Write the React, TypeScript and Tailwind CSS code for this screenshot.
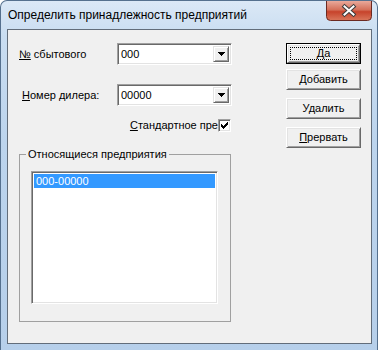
import type { ReactNode } from "react";

const sunken =
  "border border-t-[#a0a0a0] border-l-[#a0a0a0] border-b-white border-r-white shadow-[inset_1px_1px_0_#696969,inset_-1px_-1px_0_#e3e3e3]";
const raised =
  "border border-t-white border-l-white border-b-[#696969] border-r-[#696969] shadow-[inset_1px_1px_0_#e3e3e3,inset_-1px_-1px_0_#a0a0a0]";

function Arrow() {
  return (
    <svg width="7" height="4" shapeRendering="crispEdges">
      <rect x="0" y="0" width="7" height="1" fill="#000" />
      <rect x="1" y="1" width="5" height="1" fill="#000" />
      <rect x="2" y="2" width="3" height="1" fill="#000" />
      <rect x="3" y="3" width="1" height="1" fill="#000" />
    </svg>
  );
}

function ComboBox({ value }: { value: string }) {
  return (
    <div className={`flex h-[22px] w-[115px] bg-white p-[2px] ${sunken}`}>
      <div className="flex flex-1 items-center pl-[1px] text-[11px] leading-none text-black">
        {value}
      </div>
      <div
        className={`flex w-[16px] items-center justify-center bg-[#f0f0f0] border border-t-[#e3e3e3] border-l-[#e3e3e3] border-b-[#696969] border-r-[#696969] shadow-[inset_1px_1px_0_#fff,inset_-1px_-1px_0_#a0a0a0]`}
      >
        <Arrow />
      </div>
    </div>
  );
}

function Button({
  children,
  isDefault,
  className = "",
}: {
  children: ReactNode;
  isDefault?: boolean;
  className?: string;
}) {
  if (isDefault) {
    return (
      <div className={`flex h-[21px] w-[75px] border border-black ${className}`}>
        <div className={`flex flex-1 bg-[#f0f0f0] p-[2px] ${raised}`}>
          <div className="flex flex-1 items-center justify-center border border-dotted border-black text-[11px] leading-none text-black">
            {children}
          </div>
        </div>
      </div>
    );
  }
  return (
    <div
      className={`flex h-[21px] w-[75px] items-center justify-center bg-[#f0f0f0] text-[11px] leading-none text-black ${raised} ${className}`}
    >
      {children}
    </div>
  );
}

function CloseButton() {
  return (
    <svg width="46" height="20" viewBox="0 0 46 20">
      <defs>
        <linearGradient id="cb" x1="0" y1="0" x2="0" y2="1">
          <stop offset="0" stopColor="#e9a99b" />
          <stop offset="0.45" stopColor="#d4705a" />
          <stop offset="0.55" stopColor="#c7432b" />
          <stop offset="1" stopColor="#d9775c" />
        </linearGradient>
      </defs>
      <path
        d="M0.5 0 V15.5 A4 4 0 0 0 4.5 19.5 H41.5 A4 4 0 0 0 45.5 15.5 V0"
        fill="url(#cb)"
        stroke="#6b2a22"
      />
      <path
        d="M18.5 5.5 L27.5 13.5 M27.5 5.5 L18.5 13.5"
        stroke="#3b3b3b"
        strokeWidth="4"
        strokeLinecap="square"
      />
      <path
        d="M18.5 5.5 L27.5 13.5 M27.5 5.5 L18.5 13.5"
        stroke="#fff"
        strokeWidth="2"
        strokeLinecap="square"
      />
    </svg>
  );
}

export default function App() {
  return (
    <div className="h-[350px] w-[378px] overflow-hidden font-['Liberation_Sans',Arial,sans-serif]">
      <div className="flex h-[352px] w-[378px] flex-col rounded-t-[7px] border-l border-r border-t border-[#55708e] bg-[linear-gradient(180deg,#dbe8f6_0%,#c9ddf1_10%,#bcd4ed_40%,#b6cfea_100%)]">
        <div className="flex h-[28px] items-start justify-between pr-[5px]">
          <div className="pl-[7px] pt-[7px] text-[12px] leading-[14px] text-black">
            Определить принадлежность предприятий
          </div>
          <CloseButton />
        </div>
        <div className="ml-[6px] flex h-[315px] w-[365px] border border-[#626d7a] bg-[#f0f0f0] pl-[11px] pt-[13px]">
          <div className="flex w-[213px] flex-col">
            <div className="flex h-[22px] items-center">
              <span className="w-[98px] text-[11px] text-black">
                <span className="underline">№</span> сбытового
              </span>
              <ComboBox value="000" />
            </div>
            <div className="mt-[19px] flex h-[22px] items-center">
              <span className="w-[98px] pl-[3px] text-[11px] text-black">
                <span className="underline">Н</span>омер дилера:
              </span>
              <ComboBox value="00000" />
            </div>
            <div className="mt-[13px] flex h-[13px] items-center justify-end pr-[1px]">
              <span className="whitespace-nowrap text-[11px] leading-none text-black">
                <span className="underline">С</span>тандартное пре
              </span>
              <div className={`flex h-[13px] w-[13px] items-center justify-center bg-white ${sunken}`}>
                <svg width="7" height="7" viewBox="0 0 7 7" shapeRendering="crispEdges">
                  <path
                    d="M0 2h1v1h1v1h1v-1h1v-1h1v-1h1v-1h1v3h-1v1h-1v1h-1v1h-1v1h-1v-1h-1v-1h-1z"
                    fill="#000"
                  />
                </svg>
              </div>
            </div>
            <fieldset className="mt-[16px] w-[212px] border border-[#a0a0a0] p-0">
              <legend className="ml-[6px] px-[2px] text-[11px] leading-[13px] text-black">
                Относящиеся предприятия
              </legend>
              <div className="px-[11px] pb-[17px] pt-[10px]">
                <div className={`h-[133px] w-[187px] bg-white p-[2px] ${sunken}`}>
                  <div className="flex h-[14px] items-center bg-[#3399ff] pl-[2px] text-[11px] leading-none text-white">
                    000-00000
                  </div>
                </div>
              </div>
            </fieldset>
          </div>
          <div className="ml-[54px] flex flex-col">
            <Button isDefault>Да</Button>
            <Button className="mt-[5px]">Добавить</Button>
            <Button className="mt-[8px]">Удалить</Button>
            <Button className="mt-[8px]">
              <span>
                <span className="underline">П</span>рервать
              </span>
            </Button>
          </div>
        </div>
      </div>
    </div>
  );
}
